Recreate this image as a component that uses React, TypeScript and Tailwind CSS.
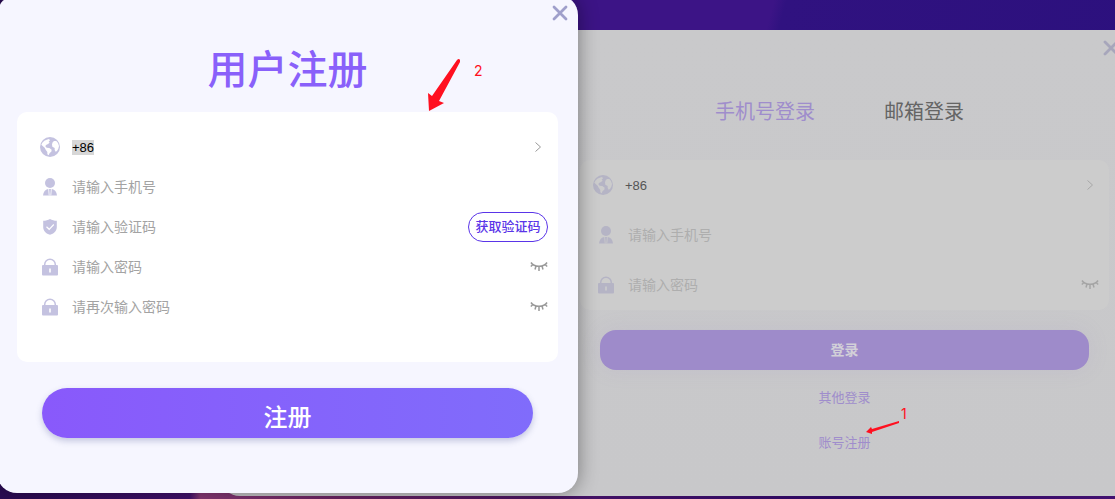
import type { InputHTMLAttributes, ReactNode } from 'react'
import { useState } from 'react'
import clsx from 'clsx'

function GlobeIcon() {
  return (
    <svg viewBox="0 0 60 60" className="size-5" aria-hidden="true">
      <circle cx="30" cy="30" r="30" fill="currentColor" />
      <path
        className="fill-(--hole)"
        d="M7 17 13 11 20 8 27 6 30 10 26 14 29 17 24 21 18 24 16 28 20 32 28 33 35 38 34 44 29 48 26 55 22 52 22 45 17 38 14 32 8 27 4 23ZM38 16 42 12 49 12 54 18 57 27 55 35 51 42 47 44 44 39 44 33 37 29 36 22Z"
      />
    </svg>
  )
}

function UserIcon() {
  return (
    <svg viewBox="0 0 20 20" className="size-5" aria-hidden="true">
      <circle cx="10" cy="6" r="5" fill="currentColor" />
      <path d="M3 18.400c.4-3.600 2.200-5.800 5-6.400h4c2.800.6 4.600 2.800 5 6.400Z" fill="currentColor" />
      <path d="m8.600 12 .6 6.400M11.400 12l-.6 6.400" className="stroke-(--hole)" strokeWidth=".8" />
    </svg>
  )
}

function ShieldIcon() {
  return (
    <svg viewBox="0 0 20 20" className="size-5" aria-hidden="true">
      <path d="M10 2c2 1.200 4.300 1.700 6.800 1.800v6.400c0 3.800-3 6.300-6.800 7.600-3.800-1.300-6.800-3.800-6.800-7.600V3.800C5.700 3.700 8 3.200 10 2Z" fill="currentColor" />
      <path d="m6.500 9.800 2.700 2.500 4.600-4.800" fill="none" className="stroke-(--hole)" strokeWidth="1.200" />
    </svg>
  )
}

function LockIcon() {
  return (
    <svg viewBox="0 0 20 20" className="size-5" aria-hidden="true">
      <path d="M4.700 9V7.500a5.300 5.300 0 0 1 10.600 0V9" fill="none" stroke="currentColor" strokeWidth="1.500" />
      <rect x="2" y="8" width="16" height="10.500" rx="1" fill="currentColor" />
      <path d="M10 11.500v4" className="stroke-(--hole)" strokeWidth="1.600" />
    </svg>
  )
}

function ClosedEyeIcon() {
  return (
    <svg viewBox="0 0 18 12" className="h-3 w-[18px]" fill="none" stroke="currentColor" strokeWidth="1.500" aria-hidden="true">
      <path d="M1 1.500c3 5 13 5 16 0M3 3.500.8 5.500M6 5 5 8.500M9 5.500V10M12 5l1 3.500M15 3.500l2.200 2" />
    </svg>
  )
}

function ChevronIcon() {
  return (
    <svg viewBox="0 0 8 12" className="h-3 w-2" fill="none" stroke="currentColor" aria-hidden="true">
      <path d="m1.500 1.500 5 4.500-5 4.500" />
    </svg>
  )
}

function CloseIcon() {
  return (
    <svg viewBox="0 0 16 16" className="size-4" fill="none" stroke="currentColor" strokeWidth="2.800" strokeLinecap="round" aria-hidden="true">
      <path d="m2 2 12 12M14 2 2 14" />
    </svg>
  )
}

interface FieldProps extends InputHTMLAttributes<HTMLInputElement> {
  icon: ReactNode
  label: string
  children?: ReactNode
}

function Field({ icon, label, children, className, ...rest }: FieldProps) {
  return (
    <div className={clsx('flex items-center', className)}>
      <label className="flex min-w-0 flex-1 items-center gap-3">
        <span className="shrink-0">{icon}</span>
        <input
          aria-label={label}
          placeholder={label}
          className="min-w-0 flex-1 bg-transparent text-sm text-black outline-none placeholder:text-(--hint)"
          {...rest}
        />
      </label>
      {children}
    </div>
  )
}

function PasswordField({ label, className }: { label: string; className: string }) {
  const [visible, setVisible] = useState(false)

  return (
    <Field icon={<LockIcon />} label={label} className={className} type={visible ? 'text' : 'password'}>
      <button type="button" aria-label="显示密码" onClick={() => setVisible(!visible)} className="text-(--eye)">
        <ClosedEyeIcon />
      </button>
    </Field>
  )
}

function RegisterDialog() {
  return (
    <section className="relative z-10 -mt-[5px] -ml-[3px] rounded-[20px] bg-[#f6f6ff] px-5 pb-[55px] shadow-[0_0_20px_rgba(0,0,0,0.4)] [--eye:#9a9a9a] [--hint:#a3a3a3] [--hole:#ffffff]">
      <button type="button" aria-label="关闭" className="absolute top-[10px] right-[10px] text-[#9f9fcb]">
        <CloseIcon />
      </button>
      <h1 className="pt-[45px] text-center text-[40px] leading-[60px] font-medium text-[#8960fa]">用户注册</h1>
      <form>
        <div className="mt-3 rounded-[10px] bg-white pt-[15px] pr-[10px] pb-[35px] pl-[23px] text-[#c4c2e0]">
          <button type="button" className="flex h-10 w-full items-center gap-3 pr-[6px]">
            <GlobeIcon />
            <span className="bg-[#d7d7d7] font-['Liberation_Sans'] text-[13px] leading-[15px] text-black">+86</span>
            <span className="ml-auto text-[#999999]">
              <ChevronIcon />
            </span>
          </button>
          <Field icon={<UserIcon />} label="请输入手机号" className="h-10" type="tel" />
          <Field icon={<ShieldIcon />} label="请输入验证码" className="h-10">
            <button type="button" className="h-[30px] w-20 shrink-0 rounded-full border border-[#5a35e8] text-[13px] font-medium text-[#5a35e8]">
              获取验证码
            </button>
          </Field>
          <PasswordField label="请输入密码" className="h-10" />
          <PasswordField label="请再次输入密码" className="h-10" />
        </div>
        <div className="px-[25px] pt-[26px]">
          <button
            type="submit"
            className="h-[50px] w-full rounded-full bg-linear-to-r from-[#8959fb] to-[#806cfb] pt-[10px] text-2xl font-medium text-white shadow-[0_3px_6px_rgba(80,90,150,0.3)]"
          >
            注册
          </button>
        </div>
      </form>
    </section>
  )
}

function LoginPanel() {
  return (
    <section className="relative mt-[30px] -ml-[358px] rounded-bl-[20px] bg-linear-to-b from-[#c9c9cb] to-[#c8c8ca] pt-[62px] pb-11 pl-[360px] [--eye:#a5a5a5] [--hint:#aeaeae] [--hole:#cccccc]">
      <button type="button" aria-label="关闭" className="absolute top-[10px] -right-1 text-[#a7a6bb]">
        <CloseIcon />
      </button>
      <div className="flex justify-center gap-[69px] pr-4 text-xl leading-10">
        <button type="button" className="text-[#9f8dcc]">手机号登录</button>
        <button type="button" className="text-[#656565]">邮箱登录</button>
      </div>
      <form className="pr-[6px]">
        <div className="mt-7 rounded-[10px] bg-[#cccccc] pr-[10px] pl-4 text-[#b5b4c5]">
          <button type="button" className="-ml-[3px] flex h-[50px] w-full items-center gap-3">
            <GlobeIcon />
            <span className="font-['Liberation_Sans'] text-[13px] leading-[15px] text-[#555555]">+86</span>
            <span className="ml-auto pr-[2px] text-[#a8a8a8]">
              <ChevronIcon />
            </span>
          </button>
          <Field icon={<UserIcon />} label="请输入手机号" className="h-[50px]" type="tel" />
          <PasswordField label="请输入密码" className="h-[50px]" />
        </div>
        <div className="px-5 pt-5">
          <button
            type="submit"
            className="h-10 w-full rounded-[16px] bg-[#9e8bca] text-sm font-bold text-[#d2d0d8] shadow-[0_0_20px_rgba(158,139,202,0.15)]"
          >
            登录
          </button>
        </div>
        <div className="mt-[17px] flex flex-col items-center gap-[25px] text-[13px] leading-5 text-[#9f8dcc]">
          <a href="#other">其他登录</a>
          <a href="#register">账号注册</a>
        </div>
      </form>
    </section>
  )
}

export default function App() {
  return (
    <main className="relative grid min-h-screen grid-cols-[578fr_537fr] items-start overflow-hidden bg-[linear-gradient(105deg,#2b0b55_0%,#3c1486_45%,#3c1486_62%,#301280_63%,#2b107d_100%)] font-['Inter','Noto_Sans_CJK_SC',sans-serif]">
      <div className="absolute inset-x-0 bottom-0 h-5 bg-[linear-gradient(90deg,#2b0b55_0%,#42116f_17%,#8a3a78_18%,#6d2465_30%,#401064_55%,#2c0860_75%,#421070_100%)]" />
      <RegisterDialog />
      <LoginPanel />
      <svg viewBox="0 0 34 54" className="absolute top-[58px] left-[428px] z-20 h-[54px] w-[34px] fill-[#ff1020]" aria-hidden="true">
        <path d="M29 2q2-2 3 0v2L11 43l5 2L1 53 0 35l4 3Z" />
      </svg>
      <span className="absolute top-[61px] left-[474px] z-20 text-sm leading-5 text-[#ff1020]">2</span>
      <svg viewBox="0 0 34 14" className="absolute top-[420px] left-[866px] z-20 h-[14px] w-[34px] fill-[#ff1020]" aria-hidden="true">
        <path d="m33 1-27 8-1-2-5 5 6 2v-2l27-9Z" />
      </svg>
      <span className="absolute top-[404px] left-[901px] z-20 text-sm leading-5 text-[#ff1020]">1</span>
    </main>
  )
}
